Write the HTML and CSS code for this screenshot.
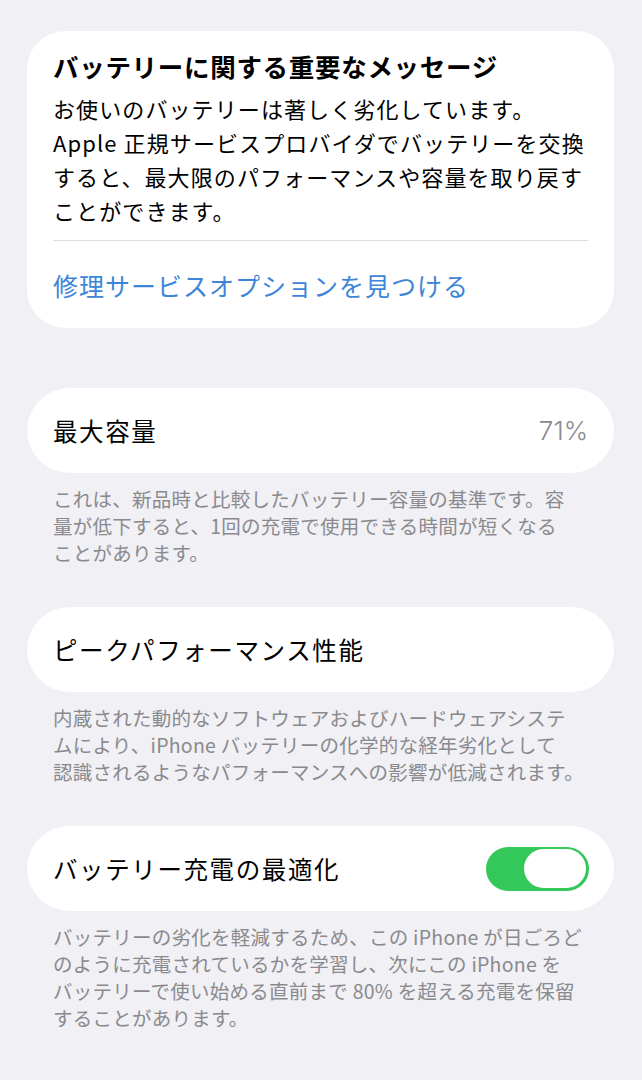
FILE: index.html
```html
<!DOCTYPE html>
<html lang="ja">
<head>
<meta charset="utf-8">
<link rel="stylesheet" href="styles.css">
</head>
<body>
<main class="page">
  <section class="card message">
    <h2 class="msg-title">バッテリーに関する重要なメッセージ</h2>
    <p class="msg-body">お使いのバッテリーは著しく劣化しています。<br>Apple 正規サービスプロバイダでバッテリーを交換<br>すると、最大限のパフォーマンスや容量を取り戻す<br>ことができます。</p>
    <div class="divider"></div>
    <a class="msg-link">修理サービスオプションを見つける</a>
  </section>

  <section class="card row">
    <span class="row-label">最大容量</span>
    <span class="row-value">71%</span>
  </section>
  <p class="footnote">これは、新品時と比較したバッテリー容量の基準です。容<br>量が低下すると、1回の充電で使用できる時間が短くなる<br>ことがあります。</p>

  <section class="card row">
    <span class="row-label">ピークパフォーマンス性能</span>
  </section>
  <p class="footnote">内蔵された動的なソフトウェアおよびハードウェアシステ<br>ムにより、iPhone バッテリーの化学的な経年劣化として<br>認識されるようなパフォーマンスへの影響が低減されます。</p>

  <section class="card row">
    <span class="row-label">バッテリー充電の最適化</span>
    <span class="toggle"><span class="knob"></span></span>
  </section>
  <p class="footnote">バッテリーの劣化を軽減するため、この iPhone が日ごろど<br>のように充電されているかを学習し、次にこの iPhone を<br>バッテリーで使い始める直前まで 80% を超える充電を保留<br>することがあります。</p>
</main>
</body>
</html>
```

FILE: styles.css
```css
* { box-sizing: border-box; }
html, body {
  margin: 0;
  padding: 0;
  background: #f0f0f5;
}
body {
  font-family: "Noto Sans CJK JP", "Noto Sans", sans-serif;
  color: #000;
  -webkit-font-smoothing: antialiased;
}
.page {
  width: 642px;
  height: 1080px;
  overflow: hidden;
  padding: 31px 28px 0 27px;
}
.card {
  background: #fff;
  width: 587px;
}
.message {
  border-radius: 38px;
  padding: 18px 26px 26px 26px;
  margin-bottom: 60px;
}
.msg-title {
  margin: 0;
  font-size: 25.5px;
  line-height: 34px;
  font-weight: 700;
  letter-spacing: 0.7px;
}
.msg-body {
  margin: 8px 0 0 0;
  font-size: 22px;
  line-height: 34px;
  font-weight: 400;
  letter-spacing: 1.1px;
  white-space: nowrap;
}
.divider {
  height: 1px;
  background: #dcdce0;
  margin: 13px 0 0 0;
}
.msg-link {
  display: block;
  margin-top: 27px;
  font-size: 25px;
  line-height: 34px;
  color: #3d85d8;
  letter-spacing: 1px;
}
.row {
  height: 85px;
  border-radius: 42.5px;
  padding: 0 26px;
  display: flex;
  align-items: center;
  justify-content: space-between;
}
.row-label {
  font-size: 24.5px;
  line-height: 34px;
  letter-spacing: 1.6px;
}
.row-value {
  font-family: "Inter", "Noto Sans", sans-serif;
  font-size: 26px;
  font-weight: 300;
  color: #8a8a8e;
}
.footnote {
  margin: 12px 0 41px 0;
  padding: 0 26px;
  font-size: 19.5px;
  line-height: 27px;
  color: #8a8a8e;
  white-space: nowrap;
  letter-spacing: 0.25px;
}
.toggle {
  width: 103px;
  height: 44px;
  border-radius: 22px;
  background: #34c759;
  display: flex;
  align-items: center;
  justify-content: flex-end;
  padding: 0 3px;
  margin-right: -1px;
}
.knob {
  width: 62px;
  height: 39px;
  border-radius: 20px;
  background: #fff;
}
```
